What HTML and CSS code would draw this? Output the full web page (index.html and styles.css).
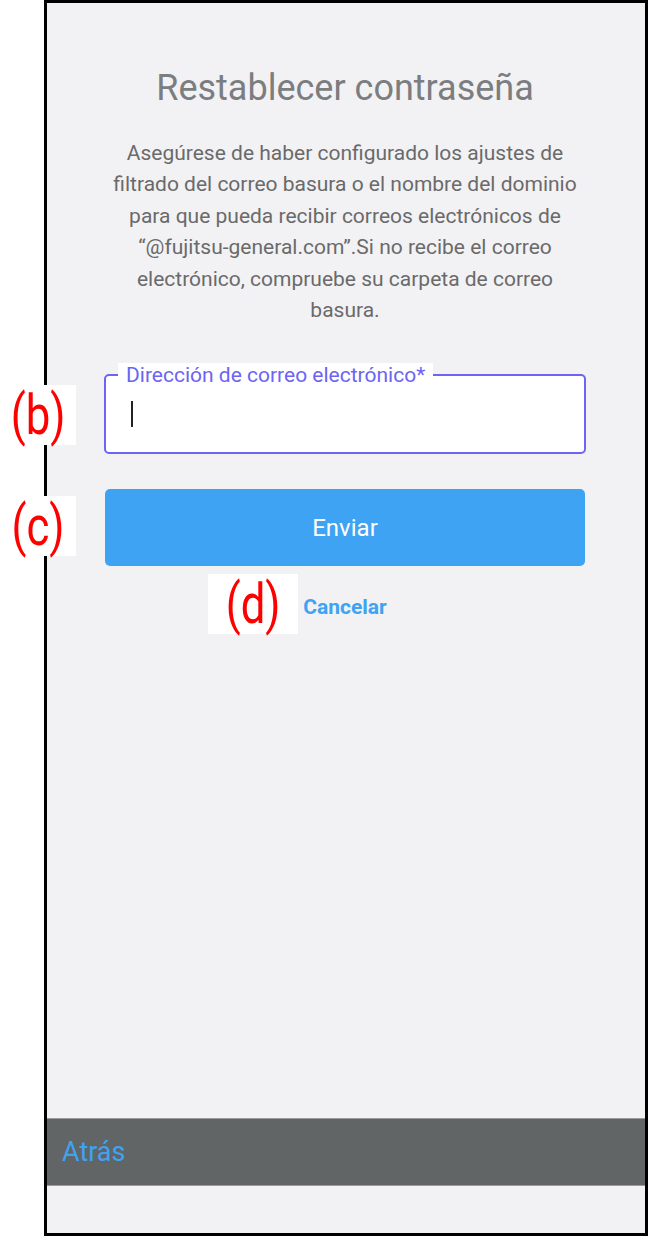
FILE: index.html
```html
<!DOCTYPE html>
<html lang="es">
    <head>
        <meta charset="UTF-8" />
        <title>Restablecer contraseña</title>
        <link rel="stylesheet" href="styles.css">
    </head>

    <body>
        <div class="phone">
            <main class="screen">
                <h1 class="title">Restablecer contraseña</h1>
                <p class="desc">
                    Asegúrese de haber configurado los ajustes de filtrado del correo basura o el nombre del dominio para que pueda recibir correos electrónicos de “@fujitsu-general.com”.Si no recibe el correo electrónico, compruebe su carpeta de correo basura.
                </p>

                <!-- 입력박스 -->
                <div class="field">
                    <label class="field-label">Dirección de correo electrónico*</label>
                    <span class="caret"></span>
                </div>

                <button class="btn-send">Enviar</button>
                <a class="cancel" href="#">Cancelar</a>
            </main>

            <footer class="bar">
                <a href="#">Atrás</a>
            </footer>
            <div class="bottom"></div>
        </div>

        <!-- 설명용 라벨 -->
        <span class="mark mark-b"><span>(b)</span></span>
        <span class="mark mark-c"><span>(c)</span></span>
        <span class="mark mark-d"><span>(d)</span></span>
    </body>
</html>
```

FILE: styles.css
```css
body {
    margin: 0;
    background-color: #fff;
    font-family: Roboto, "Noto Sans", sans-serif;
}

.phone {
    box-sizing: border-box;
    width: 604px;
    height: 1236px;
    margin-left: 44px;
    border: 3px solid #000;
    background-color: #f2f2f4;
    display: flex;
    flex-direction: column;
}

.screen {
    flex: 1;
    display: flex;
    flex-direction: column;
    align-items: center;
    padding-right: 2px;
}

.title {
    margin: 64px 0 0;
    font-size: 36px;
    line-height: 42px;
    font-weight: 400;
    color: #7b7d80;
}

.desc {
    width: 480px;
    margin: 29px 0 0;
    font-size: 21px;
    line-height: 31.4px;
    text-align: center;
    color: #6a6a6a;
}

/* 입력박스 */
.field {
    position: relative;
    box-sizing: border-box;
    width: 482px;
    height: 80px;
    margin-top: 48px;
    padding-left: 25px;
    border: 2px solid #6b64f4;
    border-radius: 5px;
    background-color: #fff;
    display: flex;
    align-items: center;
}
/* 테두리 위에 걸친 라벨 */
.field-label {
    position: absolute;
    top: -13px;
    left: 12px;
    padding: 0 8px;
    background-color: #fff;
    font-size: 21px;
    line-height: 24px;
    color: #6b64f4;
}
.caret {
    width: 2px;
    height: 26px;
    background-color: #222;
}

.btn-send {
    width: 480px;
    height: 77px;
    margin-top: 35px;
    border: 0;
    border-radius: 5px;
    background-color: #3ea3f2;
    color: #fff;
    font-family: Roboto, sans-serif;
    font-size: 24px;
}

.cancel {
    margin-top: 29px;
    font-size: 21px;
    line-height: 24px;
    font-weight: 700;
    color: #3ea3f2;
    text-decoration: none;
}

.bar {
    height: 66px;
    border-top: 1px solid #9a9c9c;
    border-bottom: 1px solid #9a9c9c;
    background-color: #626565;
    display: flex;
    align-items: center;
    padding-left: 15px;
}
.bar a {
    font-size: 27px;
    color: #3ea3f2;
    text-decoration: none;
}
.bottom {
    height: 47px;
}

/* 설명 라벨 */
.mark {
    position: absolute;
    display: flex;
    align-items: center;
    justify-content: center;
    height: 60px;
    background-color: #fff;
    color: #f00;
    font-size: 56px;
    line-height: 1;
}
.mark span {
    display: inline-block;
    transform: scaleX(0.78);
}
.mark-b {
    left: 0;
    top: 385px;
    width: 76px;
}
.mark-c {
    left: 0;
    top: 496px;
    width: 76px;
}
.mark-d {
    left: 208px;
    top: 574px;
    width: 90px;
}
```
